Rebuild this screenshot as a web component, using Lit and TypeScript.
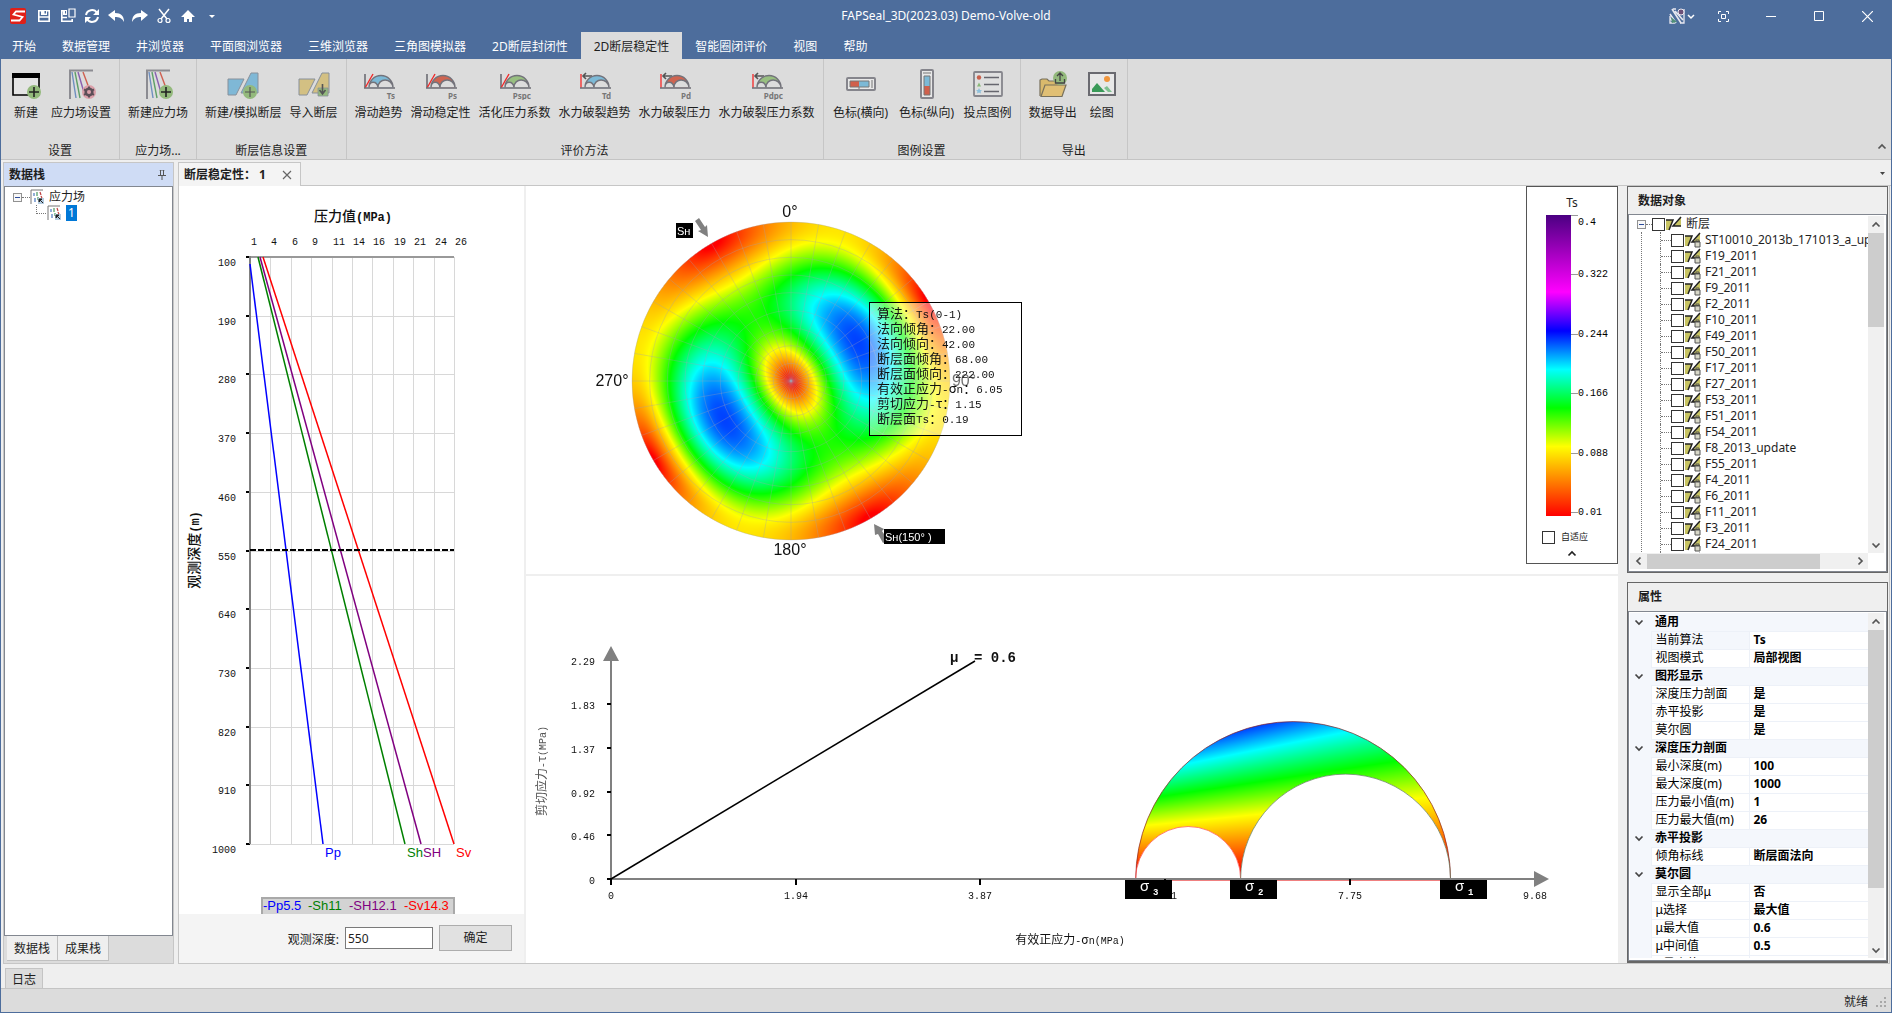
import { LitElement, html, svg, css, type TemplateResult } from "lit";
import { customElement, query } from "lit/decorators.js";

/* ---------- colour scale and stress state ---------- */

type Stop = [number, number, number, number];

const STOPS: Stop[] = [
  [0.01, 255, 0, 0],
  [0.1, 255, 255, 0],
  [0.15, 0, 255, 0],
  [0.2, 0, 255, 255],
  [0.25, 0, 0, 255],
  [0.3, 255, 0, 255],
  [0.4, 75, 0, 130],
];

const S1 = 8.8;
const S2 = 6.6;
const S3 = 5.5;
const SH_AZIMUTH = 150;

function colorOf(v: number): [number, number, number] {
  if (v <= STOPS[0][0]) return [255, 0, 0];
  for (let i = 1; i < STOPS.length; i++) {
    const a = STOPS[i - 1];
    const b = STOPS[i];
    if (v <= b[0]) {
      const t = (v - a[0]) / (b[0] - a[0]);
      return [a[1] + (b[1] - a[1]) * t, a[2] + (b[2] - a[2]) * t, a[3] + (b[3] - a[3]) * t];
    }
  }
  return [75, 0, 130];
}

const clamp01 = (v: number) => Math.max(0, Math.min(1, v));

/** Paints a canvas pixel by pixel; the sampler returns [value, coverage]. */
function paintField(canvas: HTMLCanvasElement, sample: (x: number, y: number) => [number, number]) {
  const ctx = canvas.getContext("2d");
  if (!ctx) return;
  const { width, height } = canvas;
  const img = ctx.createImageData(width, height);
  for (let y = 0; y < height; y++) {
    for (let x = 0; x < width; x++) {
      const [v, cover] = sample(x + 0.5, y + 0.5);
      if (cover <= 0) continue;
      const [r, g, b] = colorOf(v);
      const i = (y * width + x) * 4;
      img.data[i] = r;
      img.data[i + 1] = g;
      img.data[i + 2] = b;
      img.data[i + 3] = cover * 255;
    }
  }
  ctx.putImageData(img, 0, 0);
}

/** Splits a label so that Chinese and Greek runs get the wider face. */
const mixed = (s: string) =>
  s.split(/([\u0370-\u03ff\u3000-\uffef]+)/).map((p) =>
    /[\u0370-\u03ff\u3000-\uffef]/.test(p) ? svg`<tspan class="zh">${p}</tspan>` : p
  );

const chartText = css`
  :host {
    display: block;
    min-width: 0;
    min-height: 0;
    background: #fff;
  }
  svg {
    display: block;
    width: 100%;
    height: 100%;
  }
  text {
    font-family: "Liberation Mono", monospace;
    font-size: 10px;
    fill: #111;
  }
  .zh {
    font-family: "Noto Sans CJK SC", sans-serif;
    font-size: 12px;
  }
  .end {
    text-anchor: end;
  }
  .mid {
    text-anchor: middle;
  }
`;

/* ---------- depth / pressure profile ---------- */

@customElement("depth-profile")
export class DepthProfile extends LitElement {
  static styles = [
    chartText,
    css`
      .title {
        font-size: 12px;
        font-weight: bold;
      }
      .title .zh {
        font-size: 14px;
        font-weight: 500;
      }
      .curve {
        font-family: "Liberation Sans", sans-serif;
        font-size: 13px;
      }
    `,
  ];

  render() {
    const x0 = 71;
    const x1 = 275;
    const y0 = 71;
    const y1 = 658;
    const xs = [1, 4, 6, 9, 11, 14, 16, 19, 21, 24, 26];
    const ys = [100, 190, 280, 370, 460, 550, 640, 730, 820, 910, 1000];
    const gx = (i: number) => Math.round(x0 + ((x1 - x0) * i) / 10);
    const gy = (i: number) => Math.round(y0 + ((y1 - y0) * i) / 10);
    const curves: [string, string, number, number, number, number][] = [
      ["Pp", "#0000ff", 71, 78, 144, 146],
      ["Sh", "#008000", 79, 71, 226, 228],
      ["SH", "#800080", 81, 71, 242, 244],
      ["Sv", "#ff0000", 84, 71, 275, 277],
    ];
    const legend: [string, string, number][] = [
      ["-Pp5.5", "#0000ff", 84],
      ["-Sh11", "#008000", 129],
      ["-SH12.1", "#800080", 170],
      ["-Sv14.3", "#ff0000", 225],
    ];
    return html`<svg viewBox="0 0 345 728" role="img" aria-label="深度压力剖面">
      <text class="title mid" x="174" y="35">${mixed("压力值(MPa)")}</text>
      <text class="title mid" transform="translate(20 364) rotate(-90)">${mixed("观测深度(m)")}</text>
      ${xs.map(
        (v, i) => svg`
          <text x=${gx(i) + 1} y="59">${v}</text>
          <rect x=${gx(i)} y=${y0} width="1" height=${y1 - y0} fill="#d8d8d8" />`
      )}
      ${ys.map(
        (v, i) => svg`
          <rect x=${x0} y=${gy(i)} width=${x1 - x0} height="1" fill="#d8d8d8" />
          <rect x="67" y=${gy(i) - 1} width="4" height="2" fill="#000" />
          <text class="end" x="57" y=${gy(i) + 9}>${v}</text>`
      )}
      <rect x=${x0} y=${y0 - 1} width=${x1 - x0} height="2" fill="#999" />
      <rect x=${x0 - 1} y=${y0 - 1} width="2" height=${y1 - y0 + 1} fill="#808080" />
      ${curves.map(
        ([name, color, ax, ay, bx, tx]) => svg`
          <line x1=${ax} y1=${ay} x2=${bx} y2=${y1} stroke=${color} stroke-width="1.5" />
          <text class="curve" x=${tx} y="671" style="fill:${color}">${name}</text>`
      )}
      <line x1=${x0} y1="364" x2=${x1} y2="364" stroke="#000" stroke-width="2" stroke-dasharray="6 2" />
      <rect x="83" y="712" width="192" height="24" fill="#d3d3d3" stroke="#a9a9a9" stroke-width="2" />
      ${legend.map(
        ([name, color, x]) => svg`<text class="curve" x=${x} y="724" style="fill:${color}">${name}</text>`
      )}
    </svg>`;
  }
}

/* ---------- lower-hemisphere projection ---------- */

@customElement("stereo-net")
export class StereoNet extends LitElement {
  static styles = [
    chartText,
    css`
      canvas {
        display: block;
      }
      .deg {
        font-family: "Liberation Sans", sans-serif;
        font-size: 16px;
        text-anchor: middle;
      }
      .tag {
        font-family: "Liberation Sans", sans-serif;
        font-size: 11px;
        fill: #fff;
      }
      .tip,
      .tip text {
        font-size: 11px;
      }
      .tip .zh {
        font-size: 13px;
      }
    `,
  ];

  @query("canvas") private canvas!: HTMLCanvasElement;

  firstUpdated() {
    const r = 159;
    paintField(this.canvas, (x, y) => {
      const dx = x - r;
      const dy = r - y;
      const d = Math.hypot(dx, dy);
      const theta = 2 * Math.atan(Math.min(d / r, 1));
      const az = Math.atan2(dx, dy) - (SH_AZIMUTH * Math.PI) / 180;
      const n1 = Math.cos(theta) ** 2;
      const n2 = (Math.sin(theta) * Math.cos(az)) ** 2;
      const n3 = (Math.sin(theta) * Math.sin(az)) ** 2;
      const sn = n1 * S1 + n2 * S2 + n3 * S3;
      const t2 = n1 * S1 * S1 + n2 * S2 * S2 + n3 * S3 * S3 - sn * sn;
      return [Math.sqrt(Math.max(t2, 0)) / sn, clamp01(r - d + 0.5)];
    });
  }

  render() {
    const cx = 265;
    const cy = 195;
    const r = 159;
    const rings = Array.from({ length: 9 }, (_, i) => (r * (i + 1)) / 9);
    const spokes = Array.from({ length: 36 }, (_, i) => (i * Math.PI) / 18);
    const lines = [
      "算法：Ts(0-1)",
      "法向倾角：22.00",
      "法向倾向：42.00",
      "断层面倾角：68.00",
      "断层面倾向：222.00",
      "有效正应力-σn：6.05",
      "剪切应力-τ：1.15",
      "断层面Ts：0.19",
    ];
    return html`<svg viewBox="0 0 1000 388" role="img" aria-label="赤平投影">
      <foreignObject x=${cx - r} y=${cy - r} width=${2 * r} height=${2 * r}>
        <canvas width=${2 * r} height=${2 * r}></canvas>
      </foreignObject>
      <g fill="none" stroke="#a0a0b0" stroke-opacity="0.4" stroke-width="0.8">
        ${rings.map((q) => svg`<circle cx=${cx} cy=${cy} r=${q} />`)}
        ${spokes.map(
          (a) => svg`<line x1=${cx} y1=${cy} x2=${cx + r * Math.sin(a)} y2=${cy - r * Math.cos(a)} />`
        )}
      </g>
      <text class="deg" x="264" y="31">0°</text>
      <text class="deg" x="438" y="200">90°</text>
      <text class="deg" x="264" y="369">180°</text>
      <text class="deg" x="86" y="200">270°</text>
      <path d="M169 35 l4 -3 6 9 2 -2 1 12 -10 -6 3 -1z" fill="#808080" />
      <path d="M348 338 l10 5 -2 2 6 9 -5 3 -5 -9 -3 1z" fill="#808080" />
      <rect x="150" y="37" width="17" height="15" />
      <text class="tag" x="151" y="49">Sʜ</text>
      <rect x="358" y="343" width="61" height="15" />
      <text class="tag" x="359" y="355">Sʜ(150° )</text>
      <g class="tip">
        <rect x="343.5" y="116.5" width="152" height="133" fill="#fff" fill-opacity="0.4" stroke="#000" />
        ${lines.map((l, i) => svg`<text x="351" y=${132 + i * 15}>${mixed(l)}</text>`)}
      </g>
    </svg>`;
  }
}

/* ---------- Mohr circles ---------- */

@customElement("mohr-plot")
export class MohrPlot extends LitElement {
  static styles = [
    chartText,
    css`
      canvas {
        display: block;
      }
      .mu {
        font-size: 14px;
        font-weight: bold;
      }
      .side {
        fill: #555;
      }
      .sigma {
        font-family: "Liberation Sans", sans-serif;
        font-size: 15px;
        fill: #fff;
      }
      .sub {
        font-size: 9px;
        font-weight: bold;
        fill: #fff;
      }
    `,
  ];

  @query("canvas") private canvas!: HTMLCanvasElement;

  private readonly ox = 85;
  private readonly oy = 303;
  private readonly k = 95.4;

  firstUpdated() {
    const k = this.k;
    const left = 600;
    const bottom = 160;
    const circle = (x: number, t: number, a: number, b: number) =>
      clamp01(((b - a) / 2) * k - Math.hypot(x - (this.ox + ((a + b) / 2) * k), t) + 0.5);
    paintField(this.canvas, (px, py) => {
      const x = left + px;
      const t = bottom - py;
      const cover =
        circle(x, t, S3, S1) * (1 - circle(x, t, S3, S2)) * (1 - circle(x, t, S2, S1));
      return [t / (x - this.ox), cover];
    });
  }

  render() {
    const { ox, oy, k } = this;
    const sx = (v: number) => ox + v * k;
    const arc = (a: number, b: number, color: string) => svg`<path
      d="M${sx(a)} ${oy} A${((b - a) / 2) * k} ${((b - a) / 2) * k} 0 0 1 ${sx(b)} ${oy}"
      fill="none" stroke=${color} stroke-opacity="0.7" />`;
    const xt = ["0", "1.94", "3.87", "5.81", "7.75", "9.68"];
    const yt = ["0", "0.46", "0.92", "1.37", "1.83", "2.29"];
    const tags: [string, number][] = [
      ["3", 599],
      ["2", 704],
      ["1", 914],
    ];
    return html`<svg viewBox="0 0 1092 387" role="img" aria-label="莫尔圆">
      <foreignObject x="600" y=${oy - 160} width="330" height="160">
        <canvas width="330" height="160"></canvas>
      </foreignObject>
      ${arc(S3, S1, "#8b2323")} ${arc(S3, S2, "#ff5050")} ${arc(S2, S1, "#5f7f5f")}
      <rect x=${ox - 1} y="84" width="2" height="220" fill="#808080" />
      <rect x=${ox} y=${oy - 1} width="924" height="2" fill="#808080" />
      <rect x="610" y=${oy + 1} width="313" height="1" fill="#f08080" />
      ${xt.map((v, i) => {
        const x = ox + Math.round(i * 184.7);
        return svg`<rect x=${x - 1} y=${oy} width="2" height="6" />
          <text class="mid" x=${x} y=${oy + 20}>${v}</text>`;
      })}
      ${yt.map((v, i) => {
        const y = oy - Math.round(i * 43.7);
        return svg`<rect x=${ox - 4} y=${y - 1} width="4" height="2" />
          <text class="end" x="69" y=${y + 5}>${v}</text>`;
      })}
      <path d="M77 85 L85 70 L93 85z M1008 295 L1023 303 L1008 311z" fill="#808080" />
      <line x1=${ox} y1=${oy} x2="449" y2="85" stroke="#000" stroke-width="1.5" />
      <text class="mu" x="424" y="86">μ<tspan x="448">= 0.6</tspan></text>
      <text class="side mid" transform="translate(20 195) rotate(-90)">${mixed("剪切应力-τ(MPa)")}</text>
      <text class="mid" x="544" y="368">${mixed("有效正应力-σn(MPa)")}</text>
      ${tags.map(
        ([n, x]) => svg`<rect x=${x} y=${oy + 1} width="47" height="19" />
          <text class="sigma" x=${x + 15} y=${oy + 12}>σ</text>
          <text class="sub" x=${x + 28} y=${oy + 16}>${n}</text>`
      )}
    </svg>`;
  }
}

/* ---------- icons ---------- */

const plus = (x: number, y: number) => svg`
  <circle cx=${x} cy=${y} r="7" fill="#93b97c" />
  <path d="M${x - 5} ${y}h10M${x} ${y - 5}v10" stroke="#222" stroke-width="1.6" />`;

const stress = svg`
  <g stroke-width="1.4" fill="none">
    <path d="M5 31V2.5H28" stroke="#8c8c92" stroke-width="2" />
    <path d="M7 4l4 26" stroke="#6f8fc0" />
    <path d="M10 4l5 26" stroke="#5fa068" />
    <path d="M13 4l7 24" stroke="#8a5fb0" />
    <path d="M18 4l6 16" stroke="#cf5f50" />
  </g>`;

const mohr = (fill: string, label: string, variant: "t" | "d") => svg`
  ${
    variant === "t"
      ? svg`<path d="M2 6v14" stroke="#6c6c74" stroke-width="1.6" />
          <path d="M2 20L10 6" stroke="#f02828" stroke-width="1.4" />`
      : svg`<path d="M2 6v14" stroke="#f04848" stroke-width="1.6" />
          <path d="M13 8H4M7 5L4 8l3 3" stroke="#555" stroke-width="1.6" fill="none" />`
  }
  <path d="M6 19.500A12 12 0 0 1 30 19.500z" fill=${fill} />
  <path d="M6 19.500c0-7 8-7 9 0zM15 19.500c0-10 14-10 15 0z" fill="#dcdcdc" />
  <path d="M6 19.500A12 12 0 0 1 30 19.500M6 19.500c0-7 8-7 9 0c0-10 14-10 15 0" fill="none" stroke="#73737b" stroke-width="1.4" />
  <path d="M1 20h31" stroke="#73737b" stroke-width="1.6" />
  <text x="32" y="31" text-anchor="end" font-family="Noto Sans" font-size="8" font-weight="bold" fill="#777">${label}</text>`;

const fault = (fill: string) => svg`
  <path d="M1 11h16L9 27H1zM24 5h7v20H14z" fill=${fill} stroke="#88909a" stroke-width="1" />`;

const ICONS: Record<string, TemplateResult> = {
  new: svg`<path d="M3 6h26v21H3z" fill="#e4e4e4" stroke="#000" stroke-width="1.600" /><path d="M2 5h28v5H2z" />${plus(24, 24)}`,
  stressSet: svg`${stress}<circle cx="24" cy="24" r="7" fill="#dba0aa" />
    <circle cx="24" cy="24" r="3.400" fill="none" stroke="#5c4f58" stroke-width="2.400" />
    <path d="M24 18.500v11M19 21.300l10 5.500M29 21.300l-10 5.500" stroke="#5c4f58" stroke-width="2" />
    <circle cx="24" cy="24" r="2" fill="#dba0aa" />`,
  stressNew: svg`${stress}${plus(24, 24)}`,
  faultNew: svg`${fault("#7fb8d6")}<circle cx="23" cy="24" r="7" fill="#93b97c" /><path d="M18 24h10M23 19v10" stroke="#555" stroke-width="1.200" />`,
  faultIn: svg`${fault("#d3c083")}<path d="M20 20h10v8H20z" fill="#93b97c" stroke="#88909a" stroke-width=".8" /><path d="M24.500 16v9M21.500 22l3 4 3-4" stroke="#555" stroke-width="1.600" fill="none" />`,
  ts: mohr("#7cb9d6", "Ts", "t"),
  ps: mohr("#cf6450", "Ps", "t"),
  pspc: mohr("#98bf80", "Pspc", "t"),
  td: mohr("#7cb9d6", "Td", "d"),
  pd: mohr("#cf6450", "Pd", "d"),
  pdpc: mohr("#98bf80", "Pdpc", "d"),
  barH: svg`<rect x="2" y="10" width="28" height="12" rx="1" fill="#e8e8e8" stroke="#85858c" stroke-width="2" />
    <path d="M5 13h9v6H5z" fill="#d0604c" /><path d="M14 13h10v6H14z" fill="#7cb9d6" />
    <path d="M5 13h19v6H5zM27 12v8M14 19v2" fill="none" stroke="#777" />`,
  barV: svg`<rect x="10" y="2" width="12" height="28" rx="1" fill="#e8e8e8" stroke="#85858c" stroke-width="2" />
    <path d="M13 8h6v10h-6z" fill="#7cb9d6" /><path d="M13 18h6v9h-6z" fill="#d0604c" />
    <path d="M13 8h6v19h-6zM12 5h8" fill="none" stroke="#777" />`,
  legend: svg`<rect x="2" y="4" width="28" height="24" rx="1" fill="#dfdfdf" stroke="#85858c" stroke-width="1.800" />
    <circle cx="7" cy="9.500" r="2.200" fill="#c9604c" /><path d="M5 18.500l2-4 2 4z" fill="#88b878" />
    <path d="M7 20l1 2 2 .200-1.500 1.300.500 2-2-1-2 1 .500-2L4 22.200 6 22z" fill="#8cc0dc" />
    <path d="M12 9.500h15M12 16.500h15M12 23.500h15" stroke="#66666e" stroke-width="1.600" />`,
  export: svg`<path d="M3 28V12l2-1h5l2 2h13v3" fill="#d9b96c" stroke="#77705c" stroke-width="1.200" />
    <path d="M4 28.500L8 17h21l-4 11.500z" fill="#e0bf74" stroke="#77705c" stroke-width="1.200" />
    <circle cx="23" cy="10" r="7" fill="#93b97c" /><path d="M23 13V5M20 8l3-3 3 3M18.500 11v4h9v-4" stroke="#444" stroke-width="1.300" fill="none" />`,
  draw: svg`<path d="M3 5h26v22H3z" fill="#e8e8e8" stroke="#6a6a70" stroke-width="2" /><circle cx="21" cy="11" r="3" fill="#f0953c" />
    <path d="M6 24v-3l5-6 8 9z" fill="#3a9a58" /><path d="M18 20l3-2 5 6h-4z" fill="#80c090" />`,
};

const ico = (body: unknown, w = 16, h = 16) =>
  html`<svg class="ico" width=${w} height=${h} viewBox="0 0 ${w} ${h}" aria-hidden="true">${body}</svg>`;

const QUICK: [string, TemplateResult][] = [
  ["保存", svg`<path d="M2.800 2.800h10.400v10.400H2.800z" fill="none" stroke="#fff" stroke-width="1.600" /><path d="M5 2h6v5H5z" fill="#fff" /><path d="M8.500 3h1.500v2.500H8.500z" fill="#4d6d9c" /><path d="M3 9h10" stroke="#fff" stroke-width="1.500" />`],
  ["全部保存", svg`<path d="M7 2.800H1.800v10.400h10.400V11" fill="none" stroke="#fff" stroke-width="1.600" /><path d="M3 2h4v5H3z" fill="#fff" /><path d="M5 3h1v2.500H5z" fill="#4d6d9c" /><path d="M2 9.500h5" stroke="#fff" stroke-width="1.500" /><path d="M9 1h6v8H9z" fill="none" stroke="#fff" stroke-width="1.200" />`],
  ["刷新", svg`<path d="M2 7a6 6 0 0 1 11-2M14 9a6 6 0 0 1-11 2" fill="none" stroke="#fff" stroke-width="2" /><path d="M15 1v6H9zM1 15V9h6z" fill="#fff" />`],
  ["撤销", svg`<path d="M0 7l7-5v3c6 0 9 3 9 9-2-4-5-5-9-5v4z" fill="#fff" />`],
  ["重做", svg`<path d="M16 7L9 2v3c-6 0-9 3-9 9 2-4 5-5 9-5v4z" fill="#fff" />`],
  ["剪切", svg`<path d="M3 1l8 10M13 1L5 11" stroke="#fff" stroke-width="1.500" /><circle cx="4" cy="12.500" r="2" fill="none" stroke="#fff" stroke-width="1.200" /><circle cx="12" cy="12.500" r="2" fill="none" stroke="#fff" stroke-width="1.200" />`],
  ["主页", svg`<path d="M8 2l7 7h-3v5H9v-3H7v3H4V9H1z" fill="#fff" />`],
];

type Tool = [icon: string, label: string];

const RIBBON: [string, Tool[]][] = [
  ["设置", [["new", "新建"], ["stressSet", "应力场设置"]]],
  ["应力场...", [["stressNew", "新建应力场"]]],
  ["断层信息设置", [["faultNew", "新建/模拟断层"], ["faultIn", "导入断层"]]],
  ["评价方法", [["ts", "滑动趋势"], ["ps", "滑动稳定性"], ["pspc", "活化压力系数"], ["td", "水力破裂趋势"], ["pd", "水力破裂压力"], ["pdpc", "水力破裂压力系数"]]],
  ["图例设置", [["barH", "色标(横向)"], ["barV", "色标(纵向)"], ["legend", "投点图例"]]],
  ["导出", [["export", "数据导出"], ["draw", "绘图"]]],
];

const MENU = ["开始", "数据管理", "井浏览器", "平面图浏览器", "三维浏览器", "三角图模拟器", "2D断层封闭性", "2D断层稳定性", "智能圈闭评价", "视图", "帮助"];

const FAULTS = ["ST10010_2013b_171013_a_update", "F19_2011", "F21_2011", "F9_2011", "F2_2011", "F10_2011", "F49_2011", "F50_2011", "F17_2011", "F27_2011", "F53_2011", "F51_2011", "F54_2011", "F8_2013_update", "F55_2011", "F4_2011", "F6_2011", "F11_2011", "F3_2011", "F24_2011", "F25_2011"];

const PROPS: [string, [string, string][]][] = [
  ["通用", [["当前算法", "Ts"], ["视图模式", "局部视图"]]],
  ["图形显示", [["深度压力剖面", "是"], ["赤平投影", "是"], ["莫尔圆", "是"]]],
  ["深度压力剖面", [["最小深度(m)", "100"], ["最大深度(m)", "1000"], ["压力最小值(m)", "1"], ["压力最大值(m)", "26"]]],
  ["赤平投影", [["倾角标线", "断层面法向"]]],
  ["莫尔圆", [["显示全部μ", "否"], ["μ选择", "最大值"], ["μ最大值", "0.6"], ["μ中间值", "0.5"], ["μ最小值", "0.4"]]],
];

const chevron = (dir: "up" | "down" | "left" | "right", color = "#555") => {
  const d = {
    up: "M1.500 6.500L5 3l3.500 3.500",
    down: "M1.500 3.500L5 7l3.500-3.500",
    left: "M6.500 1.500L3 5l3.500 3.500",
    right: "M3.500 1.500L7 5l-3.500 3.500",
  }[dir];
  return ico(svg`<path d=${d} fill="none" stroke=${color} stroke-width="1.700" />`, 10, 10);
};

const faultIcon = (child: boolean) =>
  ico(
    svg`<path d="M0 4h7L3 14H0z" fill="#c8c462" /><path d="M0 4h7L3 14" fill="none" stroke="#222" stroke-width="1.500" />
    <path d="M15 1v9H8z" fill="#c8c462" /><path d="M15 1L7 10h8" fill="none" stroke="#222" stroke-width="1.500" />
    ${child ? svg`<path d="M10 10h5v5h-5z" fill="#d8d8c8" stroke="#555" /><path d="M11 10V8h3v2" fill="none" stroke="#555" />` : ""}`
  );

const stressIcon = ico(
  svg`<path d="M1 15V1h12" stroke="#777" fill="none" /><path d="M4 4v3M5 9v4" stroke="#4a78c0" stroke-width="1.200" /><path d="M7 3v4M8 8v3" stroke="#4a9a60" stroke-width="1.200" />
  <path d="M10 3l1 3M11 7l1 2" stroke="#c04040" stroke-width="1.200" /><path d="M8 9h6v6H8z" fill="#b4cce0" /><path d="M9 10h3l-3 3zM10 11l3 3" fill="#222" stroke="#222" />`
);

/* ---------- application shell ---------- */

@customElement("app-root")
export class AppRoot extends LitElement {
  static styles = css`
    :host {
      display: flex;
      flex-direction: column;
      box-sizing: border-box;
      height: 100vh;
      overflow: hidden;
      border: solid #4d6d9c;
      border-width: 0 1px 1px;
      background: #efefef;
      color: #1e1e1e;
      font: 12px/16px "Noto Sans", "Noto Sans CJK SC", sans-serif;
    }
    * {
      box-sizing: border-box;
    }
    button,
    input {
      font: inherit;
      color: inherit;
      margin: 0;
    }
    button {
      padding: 0;
      border: 0;
      background: none;
    }
    a {
      color: inherit;
      text-decoration: none;
    }
    ul {
      list-style: none;
      margin: 0;
      padding: 0;
    }
    h2 {
      margin: 0;
      font-size: 12px;
    }
    .ico {
      display: block;
      flex: none;
    }

    .titlebar {
      display: grid;
      grid-template-columns: 1fr auto 1fr;
      align-items: center;
      height: 32px;
      flex: none;
      background: #4d6d9c;
      color: #fff;
    }
    .quick {
      display: flex;
      align-items: center;
      gap: 8px;
      padding-left: 9px;
    }
    .quick .logo {
      margin-right: 2px;
    }
    .winbtns {
      display: flex;
      justify-content: flex-end;
      align-items: center;
    }
    .winbtns button {
      display: grid;
      place-items: center;
      width: 48px;
      height: 32px;
    }
    .winbtns .theme {
      display: flex;
      gap: 2px;
      align-items: center;
      width: 30px;
    }

    .menu {
      display: flex;
      height: 27px;
      flex: none;
      background: #4d6d9c;
      color: #fff;
    }
    .menu a {
      padding: 6px 13px 0;
      line-height: 18px;
    }
    .menu a:first-child {
      padding-left: 11px;
    }
    .menu .on {
      background: #dcdcdc;
      color: #1e1e1e;
    }

    .ribbon {
      display: flex;
      height: 101px;
      flex: none;
      background: #dcdcdc;
      border-bottom: 1px solid #c4c4c4;
    }
    .group {
      display: flex;
      flex-direction: column;
      justify-content: space-between;
      padding: 9px 4px 0;
      border-right: 1px solid #c6c6c6;
      text-align: center;
    }
    .tools {
      display: flex;
    }
    .tool {
      display: flex;
      flex-direction: column;
      align-items: center;
      gap: 4px;
      min-width: 42px;
      padding: 0 4px;
      line-height: 18px;
      white-space: nowrap;
    }
    .wide {
      min-width: 66px;
    }
    .caption {
      line-height: 16px;
    }
    .collapse {
      margin-left: auto;
      padding: 0 4px 7px 0;
      align-self: flex-end;
    }

    .work {
      display: flex;
      flex: 1;
      min-height: 0;
      gap: 4px;
      padding: 2px 0 0 2px;
    }
    .dock {
      display: flex;
      flex-direction: column;
      width: 171px;
      flex: none;
      background: #dcdcdc;
      border: 1px solid #c6c6c6;
    }
    .dockhead {
      display: flex;
      justify-content: space-between;
      align-items: center;
      height: 23px;
      padding: 0 6px 0 5px;
      background: #cfdcf5;
    }
    .dockbody {
      flex: 1;
      padding: 2px 8px;
      background: #fff;
      border: 1px solid #828790;
    }
    .node {
      display: flex;
      align-items: center;
      height: 16px;
      gap: 3px;
    }
    .node > * {
      flex: none;
    }
    .dots {
      width: 8px;
      border-top: 1px dotted #777;
    }
    .box {
      display: grid;
      place-items: center;
      width: 9px;
      height: 9px;
      border: 1px solid #919191;
      background: #f8f8f8;
    }
    .box::after {
      content: "";
      width: 5px;
      height: 1px;
      background: #2c4c9c;
    }
    .dockbody .node .box + .dots {
      margin: 0 -3px;
    }
    .dockbody .leaf {
      padding-left: 23px;
    }
    .leaf .dots {
      width: 10px;
      height: 9px;
      border: dotted #777;
      border-width: 0 0 1px 1px;
      align-self: flex-start;
      margin-right: -2px;
    }
    .picked {
      padding: 0 2px;
      background: #0078d7;
      color: #fff;
    }
    .docktabs {
      display: flex;
      height: 27px;
      padding: 0 0 2px 3px;
    }
    .docktabs button {
      padding: 1px 7px 0;
      background: #efefef;
      border: solid #c0c0c0;
      border-width: 0 1px 1px 0;
    }

    .doc {
      display: flex;
      flex-direction: column;
      flex: 1;
      min-width: 0;
    }
    .doctabs {
      display: flex;
      justify-content: space-between;
      height: 24px;
      flex: none;
      border-bottom: 1px solid #c6c6c6;
    }
    .doctab {
      display: flex;
      align-items: center;
      gap: 16px;
      height: 24px;
      padding: 0 8px 0 5px;
      border: 1px solid #c6c6c6;
      border-bottom: 0;
      background: #f4f4f4;
      font-weight: bold;
      white-space: pre;
    }
    .overflow {
      padding-right: 5px;
    }
    .panes {
      display: flex;
      flex: 1;
      min-height: 0;
      border: solid #c6c6c6;
      border-width: 0 1px 1px;
      margin-right: 1px;
    }
    .profile {
      display: flex;
      flex-direction: column;
      width: 345px;
      flex: none;
    }
    .profile depth-profile {
      flex: 1;
    }
    .depthform {
      display: flex;
      align-items: center;
      justify-content: flex-end;
      gap: 6px;
      height: 49px;
      padding: 0 12px 1px 0;
      background: #f4f4f4;
    }
    .depthform label {
      padding-top: 3px;
    }
    .depthform input {
      width: 88px;
      height: 22px;
      padding: 0 2px;
      border: 1px solid #7a7a7a;
      background: #fff;
    }
    .depthform button {
      width: 73px;
      height: 26px;
      border: 1px solid #adadad;
      background: #e1e1e1;
    }
    .plots {
      display: flex;
      flex-direction: column;
      flex: 1;
      gap: 2px;
      min-width: 0;
      margin-left: 2px;
    }
    .upper {
      display: flex;
      flex: 388 1 0;
      min-height: 0;
      background: #fff;
    }
    .upper stereo-net {
      flex: 1;
    }
    .lower {
      flex: 387 1 0;
    }
    .scale {
      display: flex;
      flex-direction: column;
      align-items: center;
      align-self: flex-start;
      width: 92px;
      height: 378px;
      padding-top: 8px;
      border: 1px solid #555;
      background: #fff;
    }
    .scale svg text {
      font: 10px "Liberation Mono", monospace;
    }
    .scale label {
      display: flex;
      align-items: center;
      align-self: flex-start;
      gap: 6px;
      font-size: 9px;
      margin: 13px 0 0 15px;
    }
    input[type="checkbox"] {
      appearance: none;
      width: 13px;
      height: 13px;
      flex: none;
      border: 1px solid #333;
      background: #fff;
    }
    .scale button {
      margin-top: 4px;
    }

    .side {
      display: flex;
      flex-direction: column;
      gap: 9px;
      width: 261px;
      flex: none;
      margin: 0 1px 0 9px;
    }
    .panel {
      display: flex;
      flex-direction: column;
      flex: 388 1 0;
      min-height: 0;
      border: 1px solid #666;
    }
    .panel + .panel {
      flex-grow: 380;
      border-width: 1px 1px 2px;
    }
    .panel h2 {
      height: 27px;
      padding: 6px 10px 0;
      flex: none;
    }
    .panel + .panel h2 {
      height: 28px;
    }
    .inner {
      display: grid;
      grid-template-columns: 1fr 16px;
      flex: 1;
      min-height: 0;
      padding: 1px 2px 2px 1px;
      border: 1px solid #828790;
      background: #fff;
    }
    .clip {
      min-width: 0;
      min-height: 0;
      overflow: hidden;
    }
    .tree {
      padding: 0 0 0 7px;
      white-space: nowrap;
    }
    .tree .node {
      gap: 0;
    }
    .tree .dots {
      margin: 0;
      width: 6px;
    }
    .tree label {
      display: flex;
      align-items: center;
    }
    .tree input {
      margin-right: 1px;
    }
    .tree .ico {
      margin-right: 4px;
    }
    .kids {
      margin-left: 4px;
      padding-left: 18px;
      border-left: 1px dotted #777;
    }
    .kids .node {
      border-left: 1px dotted #777;
    }
    .kids .dots {
      width: 10px;
    }
    .vbar {
      display: flex;
      flex-direction: column;
      align-items: center;
      background: #f0f0f0;
    }
    .vbar span,
    .hbar span {
      display: grid;
      place-items: center;
      width: 17px;
      height: 17px;
      flex: none;
    }
    .vbar .track {
      flex: 1;
      width: 100%;
    }
    .thumb {
      background: #cdcdcd;
      height: 31%;
    }
    .grid .thumb {
      height: 83%;
    }
    .hbar {
      display: flex;
      align-items: center;
      height: 16px;
      background: #f0f0f0;
    }
    .hbar .track {
      flex: 1;
      height: 15px;
    }
    .hbar .thumb {
      width: 85%;
      height: 100%;
    }
    table {
      width: 100%;
      table-layout: fixed;
      border-collapse: collapse;
    }
    tr {
      height: 18px;
    }
    th,
    td {
      padding: 0 0 0 4px;
      text-align: left;
      font-weight: normal;
      line-height: 16px;
      white-space: nowrap;
      border: 1px solid #edf1f8;
      border-width: 0 0 1px 1px;
      color: #000;
    }
    td {
      font-weight: bold;
    }
    .gutter {
      width: 21px;
      padding: 0 0 0 4px;
      background: #f4f7fc;
      border: 0;
    }
    .cat th {
      font-weight: bold;
      background: #f4f7fc;
      border-left: 0;
    }
    .namecol {
      width: 98px;
    }
    .sel {
      background: #f4f7fc;
    }

    .log {
      display: flex;
      align-items: flex-end;
      height: 24px;
      flex: none;
      padding-left: 4px;
    }
    .log button {
      width: 38px;
      height: 20px;
      padding-top: 2px;
      background: #dcdcdc;
      border: 1px solid #c4c4c4;
      border-bottom: 0;
    }
    .status {
      display: flex;
      align-items: center;
      justify-content: flex-end;
      gap: 8px;
      height: 24px;
      flex: none;
      padding: 2px 4px 0 0;
      background: #dcdcdc;
      border-top: 1px solid #c4c4c4;
    }
  `;

  private scaleLegend() {
    const ticks = ["0.4", "0.322", "0.244", "0.166", "0.088", "0.01"];
    const at = (v: number) => `${(((0.4 - v) / 0.39) * 100).toFixed(1)}%`;
    return html`<aside class="scale">
      <span>Ts</span>
      <svg class="ico" width="90" height="305" viewBox="0 0 90 305" role="img" aria-label="Ts 色标">
        <defs>
          <linearGradient id="ramp" x1="0" y1="0" x2="0" y2="1">
            ${[...STOPS].reverse().map(
              ([v, r, g, b]) => svg`<stop offset=${at(v)} stop-color="rgb(${r},${g},${b})" />`
            )}
          </linearGradient>
        </defs>
        <rect x="19" y="4" width="25" height="301" fill="url(#ramp)" />
        ${ticks.map((t, i) => {
          const y = 4 + Math.round(i * 59.4);
          return svg`<rect x="44" y=${y} width="7" height="1" fill="#999" />
            <text x="51" y=${i ? y + 3 : y + 10}>${t}</text>`;
        })}
      </svg>
      <label><input type="checkbox" />自适应</label>
      <button aria-label="收起">${chevron("up", "#222")}</button>
    </aside>`;
  }

  private vbar() {
    return html`<div class="vbar" aria-hidden="true">
      <span>${chevron("up")}</span>
      <div class="track"><div class="thumb"></div></div>
      <span>${chevron("down")}</span>
    </div>`;
  }

  render() {
    return html`
      <header class="titlebar">
        <div class="quick">
          <span class="logo">${ico(svg`<rect width="16" height="16" rx="2" fill="#e02018" /><path d="M15 3.500H6L3.500 6.500 12.500 9l-3 3.500H1" fill="none" stroke="#fff" stroke-width="1.800" />`)}</span>
          ${QUICK.map(([name, body]) => html`<button aria-label=${name}>${ico(body)}</button>`)}
          <button aria-label="更多">${ico(svg`<path d="M5 7h6l-3 3z" fill="#fff" />`)}</button>
        </div>
        <span>FAPSeal_3D(2023.03) Demo-Volve-old</span>
        <div class="winbtns">
          <button class="theme" aria-label="主题">
            ${ico(svg`<path d="M1 8v7h4l-4-5M4 1h3M15 3v12h-4M15 1v4" fill="none" stroke="#e8e8f0" stroke-width="1.300" /><path d="M3 1l9 14M6 3l8 9M1 6l6 9" stroke="#e8e8f0" stroke-width="1.600" /><circle cx="12" cy="4" r="3" fill="#6c5078" stroke="#e8e8f0" /><path d="M2 9l6 5-5 1z" fill="#4f8f78" />`)}
            ${ico(svg`<path d="M1 3l3 3 3-3" fill="none" stroke="#fff" stroke-width="1.500" />`, 8, 8)}
          </button>
          <button aria-label="全屏">${ico(svg`<path d="M.5 3V.5H3M8 .5h2.500V3M10.500 8v2.500H8M3 10.500H.5V8M3.500 3.500h4v4h-4z" fill="none" stroke="#fff" />`, 11, 11)}</button>
          <button aria-label="最小化">${ico(svg`<path d="M0 5.500h10" stroke="#fff" />`, 10, 10)}</button>
          <button aria-label="最大化">${ico(svg`<path d="M.5.5h9v9h-9z" fill="none" stroke="#fff" />`, 10, 10)}</button>
          <button aria-label="关闭">${ico(svg`<path d="M0 0l11 11M11 0L0 11" stroke="#fff" stroke-width="1.200" />`, 11, 11)}</button>
        </div>
      </header>

      <nav class="menu">
        ${MENU.map((m) => html`<a href="#" class=${m === "2D断层稳定性" ? "on" : ""}>${m}</a>`)}
      </nav>

      <div class="ribbon">
        ${RIBBON.map(
          ([caption, tools]) => html`<section class="group">
            <div class="tools">
              ${tools.map(
                ([icon, label]) => html`<button class=${label.includes("(") ? "tool wide" : "tool"}>
                  ${ico(ICONS[icon], 32, 32)}<span>${label}</span>
                </button>`
              )}
            </div>
            <div class="caption">${caption}</div>
          </section>`
        )}
        <button class="collapse" aria-label="折叠功能区">${chevron("up")}</button>
      </div>

      <main class="work">
        <section class="dock">
          <div class="dockhead">
            <h2>数据栈</h2>
            ${ico(svg`<path d="M2.500 0h5M3.500 0v5M6.500 0v5M1 5.500h8M5 6v4" stroke="#555" fill="none" />`, 10, 10)}
          </div>
          <ul class="dockbody">
            <li class="node"><span class="box"></span><span class="dots"></span>${stressIcon}<span>应力场</span></li>
            <li class="node leaf"><span class="dots"></span>${stressIcon}<span class="picked">1</span></li>
          </ul>
          <div class="docktabs"><button>数据栈</button><button>成果栈</button></div>
        </section>

        <section class="doc">
          <div class="doctabs">
            <div class="doctab">断层稳定性： 1<button aria-label="关闭标签">${ico(svg`<path d="M1 1l8 8M9 1L1 9" stroke="#666" stroke-width="1.200" />`, 10, 10)}</button></div>
            <button class="overflow" aria-label="标签列表">${ico(svg`<path d="M2 2h5L4.500 5z" fill="#444" />`, 8, 8)}</button>
          </div>
          <div class="panes">
            <div class="profile">
              <depth-profile></depth-profile>
              <form class="depthform" @submit=${(e: Event) => e.preventDefault()}>
                <label for="depth">观测深度:</label>
                <input id="depth" type="text" value="550" />
                <button>确定</button>
              </form>
            </div>
            <div class="plots">
              <div class="upper"><stereo-net></stereo-net>${this.scaleLegend()}</div>
              <mohr-plot class="lower"></mohr-plot>
            </div>
            <div class="side">
              <section class="panel">
                <h2>数据对象</h2>
                <div class="inner">
                  <div class="clip tree">
                    <div class="node">
                      <span class="box"></span><span class="dots"></span>
                      <label><input type="checkbox" />${faultIcon(false)}断层</label>
                    </div>
                    <ul class="kids">
                      ${FAULTS.map(
                        (f) => html`<li class="node">
                          <span class="dots"></span><label><input type="checkbox" />${faultIcon(true)}${f}</label>
                        </li>`
                      )}
                    </ul>
                  </div>
                  ${this.vbar()}
                  <div class="hbar" aria-hidden="true">
                    <span>${chevron("left")}</span>
                    <div class="track"><div class="thumb"></div></div>
                    <span>${chevron("right")}</span>
                  </div>
                </div>
              </section>
              <section class="panel">
                <h2>属性</h2>
                <div class="inner grid">
                  <div class="clip">
                    <table>
                      <colgroup>
                        <col class="gutter" />
                        <col class="namecol" />
                        <col />
                      </colgroup>
                      ${PROPS.map(
                        ([cat, rows]) => html`<tbody>
                          <tr class="cat">
                            <td class="gutter">${chevron("down", "#444")}</td>
                            <th colspan="2" scope="rowgroup">${cat}</th>
                          </tr>
                          ${rows.map(
                            ([k, v]) => html`<tr>
                              <td class="gutter"></td>
                              <th scope="row" class=${k === "当前算法" ? "sel" : ""}>${k}</th>
                              <td>${v}</td>
                            </tr>`
                          )}
                        </tbody>`
                      )}
                    </table>
                  </div>
                  ${this.vbar()}
                </div>
              </section>
            </div>
          </div>
        </section>
      </main>

      <div class="log"><button>日志</button></div>
      <footer class="status">
        <span>就绪</span>
        ${ico(svg`<path d="M8 1h2v2H8zM8 5h2v2H8zM4 5h2v2H4zM8 9h2v2H8zM4 9h2v2H4zM0 9h2v2H0z" fill="#a8a8a8" />`, 11, 12)}
      </footer>
    `;
  }
}
